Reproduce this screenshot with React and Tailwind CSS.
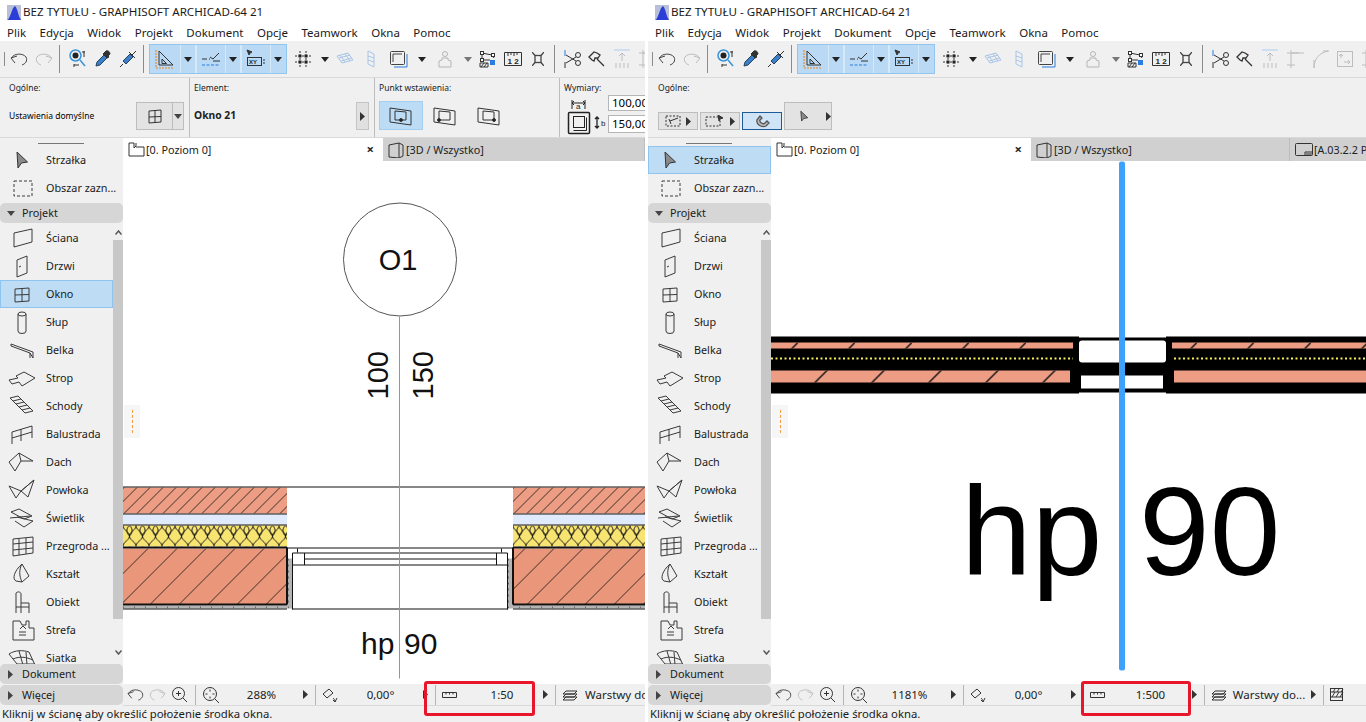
import React from "react";

const Ic = ({ w = 18, h = 18, vb, className = "", stroke = "#333", sw = 1, children }) => (
  <svg
    className={"shrink-0 " + className}
    width={w}
    height={h}
    viewBox={vb || `0 0 ${w} ${h}`}
    fill="none"
    stroke={stroke}
    strokeWidth={sw}
  >
    {children}
  </svg>
);

const Down = ({ className = "", color = "#222" }) => (
  <svg className={"shrink-0 " + className} width="8" height="5" viewBox="0 0 8 5">
    <path d="M0 0h8L4 5z" fill={color} />
  </svg>
);
const Right = ({ className = "", color = "#333" }) => (
  <svg className={"shrink-0 " + className} width="5" height="9" viewBox="0 0 5 9">
    <path d="M0 0l5 4.5L0 9z" fill={color} />
  </svg>
);
const Sep = ({ className = "" }) => <div className={"w-px bg-[#8c8c8c] shrink-0 " + className} />;

// ikony paska narzedzi
const Undo = ({ className, off, size = 18 }) => (
  <Ic w={size} h={size} vb="0 0 18 18" className={className} stroke={off ? "#b8b8b8" : "#444"}>
    <path d="M1 8l4 5M1 8l6-2M1.5 8C4 3 13 3 16 7c2 4-1 7-4 8" />
  </Ic>
);
const Redo = ({ className, size = 18 }) => (
  <Ic w={size} h={size} vb="0 0 18 18" className={className} stroke="#bdbdbd">
    <path d="M17 8l-4 5M17 8l-6-2M16.500 8C14 3 5 3 2 7c-2 4 1 7 4 8" />
  </Ic>
);
const Find = ({ className }) => (
  <Ic className={className} h={20}>
    <circle cx="6.5" cy="6.5" r="5.5" stroke="#3b93d8" strokeWidth="1.5" />
    <circle cx="6.5" cy="6.5" r="3" fill="#222" stroke="none" />
    <path d="M11 11l5 6" stroke="#3b93d8" strokeWidth="1.5" />
    <path d="M15 2v6M13 3h3M5 15v3M5 16h5" />
  </Ic>
);
const Dropper = ({ className }) => (
  <Ic className={className}>
    <path d="M2 16l1-4 8-8 3 3-8 8z" fill="#3b7fc8" stroke="#28425f" />
    <path d="M10 3l2-2c2-1 4 1 4 3l-2 2 1 1-2 1-4-4z" fill="#333" />
  </Ic>
);
const Syringe = ({ className }) => (
  <Ic className={className}>
    <path d="M1 17l3-3" />
    <path d="M4 11l7-7 3 3-7 7z" fill="#3b7fc8" stroke="#28425f" />
    <path d="M10 2l6 6M13 5l4-4" />
  </Ic>
);
const GuideIcon = () => (
  <Ic w={20} h={20} stroke="#333">
    <path d="M4 2l14 14H4z M7 10l4.5 4.5H7z" />
    <path d="M1 1v18h18" stroke="#f08a24" strokeDasharray="2 1" strokeWidth="1.2" />
  </Ic>
);
const SnapIcon = () => (
  <Ic w={20} h={20}>
    <path d="M1 10h5M8 10h1M9 8l3 2 6-6M12 12h7" />
    <path d="M1 16h18" stroke="#2b7de0" strokeDasharray="3 1.5" />
  </Ic>
);
const XYIcon = () => (
  <Ic w={20} h={20}>
    <path d="M1 1l5 2-2 1-1 2z" fill="#333" />
    <rect x="1.5" y="8.5" width="14" height="8" />
    <text x="3" y="15" fontSize="6" fontWeight="700" fill="#222" stroke="none" fontFamily="Liberation Sans">XY</text>
    <path d="M17 11h2M17 14h2" />
  </Ic>
);
const GridIcon = ({ className }) => (
  <Ic className={className}>
    <path d="M6 1v16M12 1v16M1 6h16M1 12h16" strokeDasharray="2 1.5" />
    <g fill="#222" stroke="none">
      <rect x="4.5" y="4.5" width="3" height="3" />
      <rect x="10.5" y="4.5" width="3" height="3" />
      <rect x="4.5" y="10.5" width="3" height="3" />
      <rect x="10.5" y="10.5" width="3" height="3" />
    </g>
  </Ic>
);
const Plane = ({ className }) => (
  <Ic className={className} stroke="#a8c5e6">
    <path d="M1 6l11-3 5 7-11 3zM4 5l5 7M9 4l5 7M3 8l11-3M5 11l11-3" />
  </Ic>
);
const PlaneV = ({ className }) => (
  <Ic w={8} h={18} className={className} stroke="#a8c5e6">
    <path d="M1 1l6 3v13l-6-3zM1 6l6 2M1 10l6 2" />
  </Ic>
);
const BoxIcon = ({ className }) => (
  <Ic w={20} h={18} className={className}>
    <path d="M18 4v13H5" stroke="#2b7de0" />
    <rect x="1.5" y="1.5" width="14" height="13" rx="1" stroke="#444" />
    <path d="M4 12V4h9" stroke="#444" />
  </Ic>
);
const LockIcon = ({ className }) => (
  <Ic w={14} h={18} className={className} stroke="#b5b5b5">
    <circle cx="7" cy="4" r="2.5" />
    <path d="M4 8h6v2l3 1v6H1v-6l3-1z" />
  </Ic>
);
const Nodes = ({ className }) => (
  <Ic className={className}>
    <path d="M3 3l10 2 2 3M3 4v6h8" />
    <rect x="1.5" y="1.5" width="3" height="3" fill="#fff" />
    <rect x="12.5" y="3.5" width="3" height="3" fill="#fff" />
    <rect x="1.5" y="8.5" width="3" height="3" fill="#fff" />
    <path d="M1 13h8v4H1zM2 17l3-4M5 17l3-4" />
    <rect x="11" y="10" width="5" height="5" fill="#2b7de0" stroke="none" />
  </Ic>
);
const RulerNum = ({ className }) => (
  <Ic className={className} h={16}>
    <path d="M.5 1.5h17v13H.5zM4 2v3M7 2v2M10 2v3M13 2v2" />
    <text x="3.5" y="13" fontSize="8" fontWeight="700" fill="#222" stroke="none" fontFamily="Liberation Sans">1 2</text>
  </Ic>
);
const Cross = ({ className }) => (
  <Ic w={12} h={14} className={className} stroke="#444" sw="1.3">
    <rect x="3" y="3.5" width="6" height="7" />
    <path d="M0 0l3 3.5M12 0L9 3.5M0 14l3-3.5M12 14l-3-3.5" />
  </Ic>
);
const Scissors = ({ className }) => (
  <Ic className={className} h={20}>
    <path d="M1 1v6" stroke="#2b7de0" />
    <path d="M1 13v6M2 6l10 6M2 14l10-6" />
    <circle cx="14" cy="6" r="2.5" />
    <circle cx="14" cy="14" r="2.5" />
  </Ic>
);
const Axe = ({ className }) => (
  <Ic className={className} sw="1.3">
    <path d="M1 7l5-5 3 1 3 2-2 3-3 0-1 3-2-1zM9 9l7 7" />
  </Ic>
);
const Extend = ({ className }) => (
  <Ic className={className} h={20} stroke="#bdbdbd">
    <path d="M1 1h16" stroke="#a9cdf0" />
    <path d="M9 4v8M6 7l3-3 3 3M3 14v5M7 14v5M11 14v5M15 14v5" />
  </Ic>
);
const Corner = ({ className }) => (
  <Ic className={className} h={20} stroke="#bdbdbd">
    <path d="M1 4h17M5 1v18M5 4h8M1 16h8" />
  </Ic>
);
const Arc = ({ className }) => (
  <Ic className={className} h={20} stroke="#bdbdbd">
    <path d="M3 19C3 10 8 4 17 2M3 11v8M12 2h6" />
  </Ic>
);
const Resize = ({ className }) => (
  <Ic className={className} h={18} stroke="#bdbdbd">
    <rect x="1.5" y="1.5" width="15" height="15" />
    <path d="M5 8V4l-2 2M5 4l2 2M8 12h6l-2-2M14 12l-2 2" />
  </Ic>
);

// ikony palety
const P = {
  arrow: <path d="M10 4l1 16 3.500-5 6-1z" fill="#8a8a8a" stroke="#333" />,
  marquee: <path d="M7 5h18v15H7z" strokeDasharray="3 2" />,
  wall: <path d="M7 7l18-4v13L7 21z" />,
  door: <><path d="M10 6l10-4v17l-10 4z" /><path d="M12 13l2-1" /></>,
  window: <><path d="M8 7l14-1v13L8 20z M15 6.5v13 M8 13l14-.5" /></>,
  column: <><path d="M11 4v17a4 2.5 0 0 0 8 0V4" /><ellipse cx="15" cy="4" rx="4" ry="2" /></>,
  beam: <><path d="M4 6l22 8v6M4 6v2l19 7 3 5" /><path d="M23 15v5" /></>,
  slab: <path d="M2 14l9-2-2-2 8-4 11 6-13 8-3-4-7 2z" />,
  stairs: <path d="M3 4l8-2 3 3-8 2zM6 7l3 3 8-2-3-3M9 10l3 3 8-2-3-3M12 13l3 3 8-2-3-3M15 16l3 3 8-2-3-3" />,
  rail: <path d="M5 10l20-6M5 16l20-6M5 10v12M14 7v12M25 4v12" />,
  roof: <path d="M2 12l10-9 14 8-12 0-6 10zM12 3l2 8" />,
  shell: <path d="M2 8l12 5 13-11-6 17-7-6-5 7zM14 13l13-11" />,
  skylight: <path d="M4 6l8-3 13 7-8 3zM3 12l20-2M10 11l16 4-9 6-9-6" />,
  curtain: <path d="M6 5l20-2v16L6 22zM6 10l20-2M6 16l20-2M12 5v16M19 4v16" />,
  morph: <path d="M15 2l7 12-7 6-6-1c-4-2-2-10 6-17zM15 2c-3 5-3 12 0 18" />,
  chair: <path d="M9 3c2-2 5-1 5 1v9h8v10M9 3v14h13M9 17v6M14 13v10" />,
  zone: <path d="M6 3h7l2 4h4V3h3v7h5v12H6zM12 14h7M12 17h7M13 11l3-3 3 3" />,
  mesh: <path d="M2 8c6-4 14-4 20-2l6 13M2 8l8 10M12 5l4 14M19 6l1 13M6 13c7-3 13-2 20 1M10 18h18" />,
};

const Tool = ({ icon, label, active }) => (
  <div
    className={
      "flex items-center h-[28px] shrink-0 " +
      (active ? "bg-[#bfdcf5] outline outline-[#8fc4f0] -outline-offset-1" : "")
    }
  >
    <Ic w={32} h={24} className="ml-[7px]" stroke="#3a3a3a">
      {P[icon]}
    </Ic>
    <span className="ml-[7px] text-[10.8px] whitespace-nowrap text-[#1a1a1a]">{label}</span>
  </div>
);

const Head = ({ label, open }) => (
  <div className="flex items-center h-[20px] bg-[#d6d6d6] rounded-[5px] shrink-0">
    {open ? <Down className="ml-[7px]" color="#444" /> : <Right className="ml-[8px]" color="#444" />}
    <span className={(open ? "ml-[7px]" : "ml-[9px]") + " text-[10.8px] text-[#1a1a1a]"}>{label}</span>
  </div>
);

const tools = [
  ["wall", "Ściana"],
  ["door", "Drzwi"],
  ["window", "Okno"],
  ["column", "Słup"],
  ["beam", "Belka"],
  ["slab", "Strop"],
  ["stairs", "Schody"],
  ["rail", "Balustrada"],
  ["roof", "Dach"],
  ["shell", "Powłoka"],
  ["skylight", "Świetlik"],
  ["curtain", "Przegroda ..."],
  ["morph", "Kształt"],
  ["chair", "Obiekt"],
  ["zone", "Strefa"],
  ["mesh", "Siatka"],
];

const Toolbox = ({ selected }) => (
  <div className="w-[123px] shrink-0 bg-[#f0f0f0] flex flex-col">
    <div className="h-[3px] w-[46px] ml-[38px] mt-[5px] border-t border-[#777] shrink-0" />
    <Tool icon="arrow" label="Strzałka" active={selected === "Strzałka"} />
    <Tool icon="marquee" label="Obszar zazn..." />
    <div className="h-px shrink-0" />
    <Head label="Projekt" open />
    <div className="h-[441px] flex overflow-hidden shrink-0">
      <div className="w-[113px] shrink-0 flex flex-col pt-px">
        {tools.map(([icon, label]) => (
          <Tool key={label} icon={icon} label={label} active={label === selected} />
        ))}
      </div>
      <div className="w-[10px] shrink-0 flex flex-col items-center">
        <svg className="mt-[7px]" width="7" height="5" viewBox="0 0 7 5" fill="none" stroke="#555" strokeWidth="1.5">
          <path d="M.5 4.5L3.5 1l3 3.5" />
        </svg>
        <div className="w-full h-[379px] bg-[#c8c8c8] mt-[5px]" />
        <svg className="mt-[31px]" width="7" height="5" viewBox="0 0 7 5" fill="none" stroke="#555" strokeWidth="1.5">
          <path d="M.5.5L3.5 4l3-3.5" />
        </svg>
      </div>
    </div>
    <Head label="Dokument" />
    <div className="h-px shrink-0" />
    <Head label="Więcej" />
  </div>
);

const Toolbar = () => (
  <div className="h-[37px] bg-[#f0f0f0] border-b border-[#d9d9d9] flex items-center shrink-0">
    <Sep className="ml-[4px] h-[14px]" />
    <Undo className="ml-[5px]" />
    <Redo className="ml-[7px]" />
    <Sep className="ml-[6px] h-[28px]" />
    <Find className="ml-[9px]" />
    <Dropper className="ml-[7px]" />
    <Syringe className="ml-[7px]" />
    <Sep className="ml-[6px] h-[28px]" />
    <div className="ml-[5px] w-[138px] h-[30px] bg-[#b9d9f4] border border-[#93c6ef] flex items-center shrink-0">
      <div className="w-[30px] flex justify-center"><GuideIcon /></div>
      <div className="w-[15px] h-full border-l border-[#d6e9f9] flex items-center justify-center"><Down /></div>
      <div className="w-[30px] h-full border-l-2 border-[#d6e9f9] flex items-center justify-center"><SnapIcon /></div>
      <div className="w-[15px] h-full border-l border-[#d6e9f9] flex items-center justify-center"><Down /></div>
      <div className="w-[30px] h-full border-l-2 border-[#d6e9f9] flex items-center justify-center"><XYIcon /></div>
      <div className="w-[15px] h-full border-l border-[#d6e9f9] flex items-center justify-center"><Down /></div>
    </div>
    <GridIcon className="ml-[7px]" />
    <Down className="ml-[9px]" />
    <Plane className="ml-[7px]" />
    <PlaneV className="ml-[13px]" />
    <BoxIcon className="ml-[14px]" />
    <Down className="ml-[9px]" />
    <LockIcon className="ml-[12px]" />
    <Down className="ml-[12px]" color="#777" />
    <Nodes className="ml-[7px]" />
    <RulerNum className="ml-[7px]" />
    <Cross className="ml-[10px]" />
    <Sep className="ml-[10px] h-[28px]" />
    <Scissors className="ml-[9px]" />
    <Axe className="ml-[6px]" />
    <Extend className="ml-[7px]" />
    <Corner className="ml-[7px]" />
    <Arc className="ml-[7px]" />
    <Resize className="ml-[7px]" />
    <Corner className="ml-[7px]" />
  </div>
);

const Label = ({ children }) => <div className="text-[8.5px] leading-[12px] text-[#222]">{children}</div>;

const InsertIcon = ({ dot }) => (
  <Ic w={24} h={20} stroke="#333">
    <path d="M1 2l21 3v14L1 16z" />
    <path d="M6 5l11 1v8H6z" />
    <circle cx={dot} cy="14" r="1.5" fill="#222" />
  </Ic>
);

const InfoLeft = () => (
  <div className="h-[60px] bg-[#f0f0f0] border-b border-[#d9d9d9] flex shrink-0">
    <div className="w-[190px] border-r border-[#bdbdbd] pl-[9px] pt-[4px] shrink-0 flex flex-col">
      <Label>Ogólne:</Label>
      <div className="flex items-center mt-[8px]">
        <span className="text-[8.5px] whitespace-nowrap w-[127px]">Ustawienia domyślne</span>
        <div className="w-[48px] h-[28px] bg-[#e3e3e3] border border-[#bdbdbd] flex items-center">
          <div className="w-[36px] flex justify-center">
            <Ic w={16} h={16} stroke="#333">
              <path d="M2 3l12-1v12L2 15zM8 2.5V14.5M2 9l12-.5" />
            </Ic>
          </div>
          <div className="w-[11px] h-full border-l border-[#bdbdbd] flex items-center justify-center">
            <Down color="#444" />
          </div>
        </div>
      </div>
    </div>
    <div className="w-[185px] border-r border-[#bdbdbd] pl-[4px] pt-[4px] shrink-0 flex flex-col">
      <Label>Element:</Label>
      <div className="flex items-center justify-between mt-[8px]">
        <span className="text-[10.3px] font-bold text-[#222]">Okno 21</span>
        <div className="mr-[5px] w-[13px] h-[28px] bg-[#e0e0e0] border border-[#c4c4c4] flex items-center justify-center">
          <Right />
        </div>
      </div>
    </div>
    <div className="w-[185px] border-r border-[#bdbdbd] pl-[4px] pt-[4px] shrink-0 flex flex-col">
      <Label>Punkt wstawienia:</Label>
      <div className="flex mt-[7px]">
        <div className="w-[44px] h-[29px] bg-[#bcdcf5] border border-[#a5cff1] flex items-center justify-center">
          <InsertIcon dot={12} />
        </div>
        <div className="w-[44px] h-[29px] flex items-center justify-center"><InsertIcon dot={6} /></div>
        <div className="w-[44px] h-[29px] flex items-center justify-center"><InsertIcon dot={17} /></div>
      </div>
    </div>
    <div className="flex-1 pl-[4px] pt-[4px] overflow-hidden">
      <Label>Wymiary:</Label>
      <div className="flex">
        <Ic w={44} h={42} className="mt-[2px]" stroke="#222">
          <path d="M8 4v9M21 4v9M8 7h13M10 5L8 7l2 2M19 5l2 2-2 2" />
          <text x="12" y="13" fontSize="8" fill="#222" stroke="none" fontFamily="Liberation Sans">a</text>
          <rect x="4.5" y="16.5" width="21" height="21" rx="1" strokeWidth="1.5" />
          <rect x="9.5" y="20.5" width="11" height="11" />
          <path d="M9.500 34.500h13v-13" />
          <path d="M33 21v11M31 23l2-2 2 2M31 30l2 2 2-2" strokeWidth="1.3" />
          <text x="37" y="30" fontSize="8" fill="#222" stroke="none" fontFamily="Liberation Sans">b</text>
        </Ic>
        <div className="flex flex-col mt-[1px]">
          <div className="w-[60px] h-[16px] bg-white border border-[#b5b5b5] text-[11.5px] leading-[14px] pl-[3px]">100,00</div>
          <div className="w-[60px] h-[18px] mt-[4px] bg-white border border-[#b5b5b5] text-[11.5px] leading-[16px] pl-[3px]">150,00</div>
        </div>
      </div>
    </div>
  </div>
);

const MiniBtn = ({ active, children }) => (
  <div
    className={
      "w-[40px] h-[18px] flex items-center justify-center gap-[5px] " +
      (active ? "border border-[#1c5a9a] bg-[#cfe4f6]" : "border border-[#bdbdbd] bg-[#e3e3e3]")
    }
  >
    {children}
  </div>
);

const InfoRight = () => (
  <div className="h-[60px] bg-[#f0f0f0] border-b border-[#d9d9d9] pl-[10px] pt-[4px] shrink-0">
    <Label>Ogólne:</Label>
    <div className="flex items-end mt-[8px] gap-[2px]">
      <MiniBtn>
        <Ic w={16} h={12} stroke="#333"><path d="M1 1h14v10H1z" strokeDasharray="2 1.5" /><path d="M5 6l8-3M4 4l2 5" /></Ic>
        <Right />
      </MiniBtn>
      <MiniBtn>
        <Ic w={20} h={12} stroke="#333"><path d="M1 2h14v9H1z" strokeDasharray="2 1.5" /><path d="M13 0l5 3-3 1-1 2z" fill="#333" /></Ic>
        <Right />
      </MiniBtn>
      <MiniBtn active>
        <Ic w={16} h={16} stroke="#555" sw="1.3">
          <path d="M3 7l3-4 2 2-2 2c-1 2 3 5 5 3l2-2 2 2-3 3c-5 2-10-2-9-6z" fill="#bbb" />
        </Ic>
      </MiniBtn>
      <div className="w-[48px] h-[28px] bg-[#e3e3e3] border border-[#bdbdbd] flex items-center pl-[15px] gap-[17px]">
        <svg width="11" height="15" viewBox="0 0 11 15"><path d="M1 1l1 12 2.500-3 5-1z" fill="#8a8a8a" stroke="#333" /></svg>
        <Right />
      </div>
    </div>
  </div>
);

const Tab = ({ w, icon, label, close, active }) => (
  <div className={"flex items-center h-full shrink-0 " + w + " " + (active ? "bg-white" : "bg-[#d0d0d0] border-r border-[#bdbdbd]")}>
    <div className="ml-[5px] flex">{icon}</div>
    <span className="ml-px mt-px text-[10.8px] text-[#222] whitespace-nowrap">{label}</span>
    {close && <span className="ml-auto mr-[9px] text-[13px] leading-none font-bold text-[#222]">×</span>}
  </div>
);

const PlanIcon = (
  <Ic w={17} h={15} stroke="#333"><path d="M1 1h5v5l2-2v-3M1 1v13h15V5H8" /></Ic>
);
const CubeIcon = (
  <Ic w={17} h={16} stroke="#333"><path d="M1 3l10-2 4 2v11l-4 2-10-1zM11 1v15" /></Ic>
);
const SheetIcon = (
  <Ic w={18} h={14} stroke="#333"><rect x=".5" y=".5" width="17" height="12" rx="1" /><path d="M10 12.5V9h7.5M11 11h6" /></Ic>
);

const Seg = ({ w, icon, label, arrow = true, textClass = "" }) => (
  <div className={"flex items-center h-full shrink-0 " + w}>
    <div className="w-px h-[20px] bg-[#b5b5b5]" />
    <div className="ml-[6px] flex">{icon}</div>
    <span className={"flex-1 text-center text-[11.5px] text-[#222] whitespace-nowrap " + textClass}>{label}</span>
    {arrow && <Right className="mr-[7px]" />}
  </div>
);

const Status = ({ zoom, scale, wide }) => (
  <div className="h-[22px] bg-[#f0f0f0] flex items-center shrink-0 border-b border-[#d9d9d9]">
    <div className="w-[72px] flex items-center shrink-0 pl-[4px] gap-[5px]">
      <Undo size={17} />
      <Redo size={17} />
      <Ic w={17} h={17}>
        <circle cx="7.5" cy="7.5" r="6" />
        <path d="M12 12l4 4M5 7.5h5M7.5 5v5" />
      </Ic>
    </div>
    <Seg
      w="w-[120px]"
      label={zoom}
      icon={
        <Ic w={18} h={18}>
          <circle cx="8" cy="8" r="6.5" />
          <path d="M13 13l4 4M8 3.5v2M8 10.5v2M3.5 8h2M10.5 8h2" />
        </Ic>
      }
    />
    <Seg
      w="w-[120px]"
      label="0,00°"
      icon={
        <Ic w={16} h={16}>
          <path d="M1 7l6-5 4 4-6 5zM11 13l2 2 2-4M13 15c0-2-1-3-2-4" />
        </Ic>
      }
    />
    <Seg
      w={wide ? "w-[121px]" : "w-[120px]"}
      label={scale}
      textClass="pl-[4px]"
      icon={
        <Ic w={15} h={8} className="self-center">
          <path d="M.5 1.5v5h14v-5zM4 1.5v2M7.5 1.5v2M11 1.5v2" />
        </Ic>
      }
    />
    <Seg
      w={wide ? "w-[119px]" : "w-[120px]"}
      label={wide ? "Warstwy do..." : "Warstwy do"}
      arrow={wide}
      textClass={wide ? "" : "text-left ml-[7px]"}
      icon={
        <Ic w={16} h={14}>
          <path d="M1 9l3-3h11l-3 3zM1 6l3-3h11l-3 3zM1 12l3-3h11l-3 3z" />
        </Ic>
      }
    />
    {wide && (
      <Seg
        w="w-[44px]"
        arrow={false}
        label=""
        icon={
          <Ic w={14} h={14}>
            <rect x=".5" y=".5" width="12" height="12" />
            <path d="M.5 4h12M.5 9h12M3 4l2-3M7 4l2-3M11 4l2-3M2 9l3-5M6 9l3-5M10 9l3-5" />
          </Ic>
        }
      />
    )}
  </div>
);

const Dash = () => (
  <div className="absolute left-px top-[244px] w-[16px] h-[33px] bg-[#f6f6f6] flex justify-center py-[5px]">
    <div className="h-full border-l border-dashed border-[#f0a040]" />
  </div>
);

const Defs = () => (
  <defs>
    <pattern id="hatchA" width="13" height="13" patternUnits="userSpaceOnUse">
      <rect width="13" height="13" fill="#ec9d83" />
      <path d="M-1 14L14-1" stroke="#111" strokeWidth=".8" />
    </pattern>
    <pattern id="hatchB" width="29" height="29" patternUnits="userSpaceOnUse">
      <rect width="29" height="29" fill="#e9967a" />
      <path d="M-1 30L30-1" stroke="#111" strokeWidth=".8" />
    </pattern>
    <pattern id="wool" x="123" y="525" width="13" height="21" patternUnits="userSpaceOnUse">
      <rect width="13" height="21" fill="#f7e471" />
      <path
        d="M0 0C0 5 6.5 6 6.5 10.5S0 16 0 21M13 0C13 5 6.5 6 6.5 10.5S13 16 13 21M6.5 0C3 3 3 7 6.5 10.5C10 7 10 3 6.5 0"
        fill="none"
        stroke="#111"
        strokeWidth="1"
      />
    </pattern>
    <pattern id="conc" width="11" height="6" patternUnits="userSpaceOnUse">
      <rect width="11" height="6" fill="#b4b4b4" />
      <path d="M2 1h1M7 4h1" stroke="#222" />
    </pattern>
  </defs>
);

const WallPart = ({ x, w }) => (
  <g>
    <rect x={x} y="487" width={w} height="26" fill="url(#hatchA)" />
    <rect x={x} y="514" width={w} height="10" fill="#dfeafc" />
    <rect x={x} y="525" width={w} height="21" fill="url(#wool)" />
    <rect x={x} y="548" width={w} height="56" fill="url(#hatchB)" />
    <rect x={x} y="605" width={w} height="3" fill="url(#conc)" />
    <path d={`M${x} 486.5h${w}M${x} 513.5h${w}M${x} 524.5h${w}`} stroke="#111" fill="none" />
    <path d={`M${x} 547h${w}M${x} 604h${w}`} stroke="#111" strokeWidth="2" fill="none" />
    <path d={`M${x} 608.5h${w}`} stroke="#111" fill="none" />
  </g>
);

const LeftCanvas = () => (
  <div className="flex-1 relative bg-white overflow-hidden">
    <svg className="block w-full h-full" viewBox="123 161 522 522" fontFamily="Liberation Sans">
      <Defs />
      <circle cx="400" cy="259" r="56.5" fill="none" stroke="#555" />
      <text x="398" y="269" textAnchor="middle" fontSize="29" fill="#111">O1</text>
      <text transform="translate(388 399) rotate(-90)" fontSize="29" fill="#111">100</text>
      <text transform="translate(433 399) rotate(-90)" fontSize="29" fill="#111">150</text>
      <WallPart x={123} w={164} />
      <WallPart x={513} w={132} />
      <path d="M287 486.5h226M287 547.5h226" stroke="#111" fill="none" />
      <rect x="287" y="558" width="5" height="50" fill="url(#conc)" />
      <rect x="508" y="558" width="5" height="50" fill="url(#conc)" />
      <path
        d="M297.5 548v4M501.5 548v4M292.5 552.5h215v12h-215zM304.5 552.5v12M496.5 552.5v12M304.5 558.5h192M292.5 564v45M507.5 564v45M292 608.500h216"
        stroke="#111"
        fill="none"
      />
      <path d="M287 547v57M513 547v57" stroke="#111" strokeWidth="2" fill="none" />
      <path d="M399.5 316v362" stroke="#6b9fd0" fill="none" />
      <text x="361" y="653" fontSize="30" fill="#111">hp</text>
      <text x="404" y="653" fontSize="30" fill="#111">90</text>
    </svg>
    <Dash />
  </div>
);

const RightCanvas = () => (
  <div className="flex-1 relative bg-white overflow-hidden">
    <svg className="block w-full h-full" viewBox="771 161 595 522" fontFamily="Liberation Sans">
      <defs>
        <pattern id="hatchC" width="57" height="57" patternUnits="userSpaceOnUse">
          <path d="M-1 58L58-1" stroke="#111" strokeWidth="1.5" />
        </pattern>
      </defs>
      <rect x="771" y="336" width="308" height="57" fill="#000" />
      <rect x="1166" y="336" width="200" height="57" fill="#000" />
      <rect x="1079" y="337" width="87" height="55" fill="#000" />
      <rect x="771" y="342" width="302" height="6" fill="#ec9d83" />
      <rect x="771" y="342" width="302" height="6" fill="url(#hatchC)" />
      <rect x="771" y="370" width="299" height="12" fill="#ec9d83" />
      <rect x="771" y="370" width="299" height="12" fill="url(#hatchC)" />
      <rect x="1172" y="342" width="194" height="6" fill="#ec9d83" />
      <rect x="1172" y="342" width="194" height="6" fill="url(#hatchC)" />
      <rect x="1174" y="370" width="192" height="12" fill="#ec9d83" />
      <path d="M771 358h302M1174 358h192" stroke="#f7ee60" strokeWidth="2" strokeDasharray="2 2.5" />
      <rect x="1079" y="340" width="87" height="22" rx="3" fill="#fff" />
      <rect x="1081" y="375" width="82" height="13" fill="#fff" />
      <text x="961" y="574" fontSize="127" fill="#000">hp</text>
      <text x="1139" y="574" fontSize="127" fill="#000">90</text>
      <rect x="1119" y="161" width="6" height="509" rx="2" fill="#3ea2fb" />
    </svg>
    <Dash />
  </div>
);

const Windowed = ({ selected, info, canvas, zoom, scale, wide, box }) => (
  <div className={"h-[722px] shrink-0 flex flex-col overflow-hidden relative " + (wide ? "w-[718px]" : "w-[645px]")}>
    <div className="h-[24px] bg-white flex items-center shrink-0">
      <svg className="ml-[7px]" width="14" height="15" viewBox="0 0 14 15">
        <rect width="14" height="15" fill="#b9bfd6" />
        <path d="M0 15C3 15 5 2 8 1c3 3 3 10 6 14z" fill="#2b3fd6" />
      </svg>
      <span className="ml-[2px] text-[11.6px] text-[#1a1a1a] whitespace-nowrap">BEZ TYTUŁU - GRAPHISOFT ARCHICAD-64 21</span>
    </div>
    <div className="h-[17px] bg-white flex items-center shrink-0 pl-[7px] gap-[13.5px] text-[11.5px] text-[#1a1a1a]">
      {["Plik", "Edycja", "Widok", "Projekt", "Dokument", "Opcje", "Teamwork", "Okna", "Pomoc"].map((m) => (
        <span key={m}>{m}</span>
      ))}
    </div>
    <Toolbar />
    {info}
    <div className="flex-1 flex min-h-0">
      <Toolbox selected={selected} />
      <div className="flex-1 flex flex-col min-w-0">
        <div className="h-[23px] flex shrink-0 bg-[#d0d0d0] overflow-hidden">
          <Tab w="w-[260px]" icon={PlanIcon} label="[0. Poziom 0]" close active />
          <Tab w={wide ? "w-[259px]" : "w-[262px]"} icon={CubeIcon} label="[3D / Wszystko]" />
          {wide && <Tab w="w-[100px]" icon={SheetIcon} label="[A.03.2.2 P" />}
        </div>
        {canvas}
        <Status zoom={zoom} scale={scale} wide={wide} />
      </div>
    </div>
    <div className="h-[16px] bg-[#f0f0f0] shrink-0 pl-[2px] text-[11.3px] leading-[16px] text-[#1a1a1a] whitespace-nowrap">
      Kliknij w ścianę aby określić położenie środka okna.
    </div>
    <div className={"absolute top-[681px] h-[35px] border-[3px] border-[#e8162b] rounded-[3px] " + box} />
  </div>
);

export default function App() {
  return (
    <div className="w-[1366px] h-[722px] bg-white flex gap-[3px] overflow-hidden font-['Noto_Sans','Open_Sans',sans-serif]">
      <Windowed selected="Okno" info={<InfoLeft />} canvas={<LeftCanvas />} zoom="288%" scale="1:50" box="left-[424px] w-[111px]" />
      <Windowed selected="Strzałka" info={<InfoRight />} canvas={<RightCanvas />} zoom="1181%" scale="1:500" wide box="left-[433px] w-[110px]" />
    </div>
  );
}
